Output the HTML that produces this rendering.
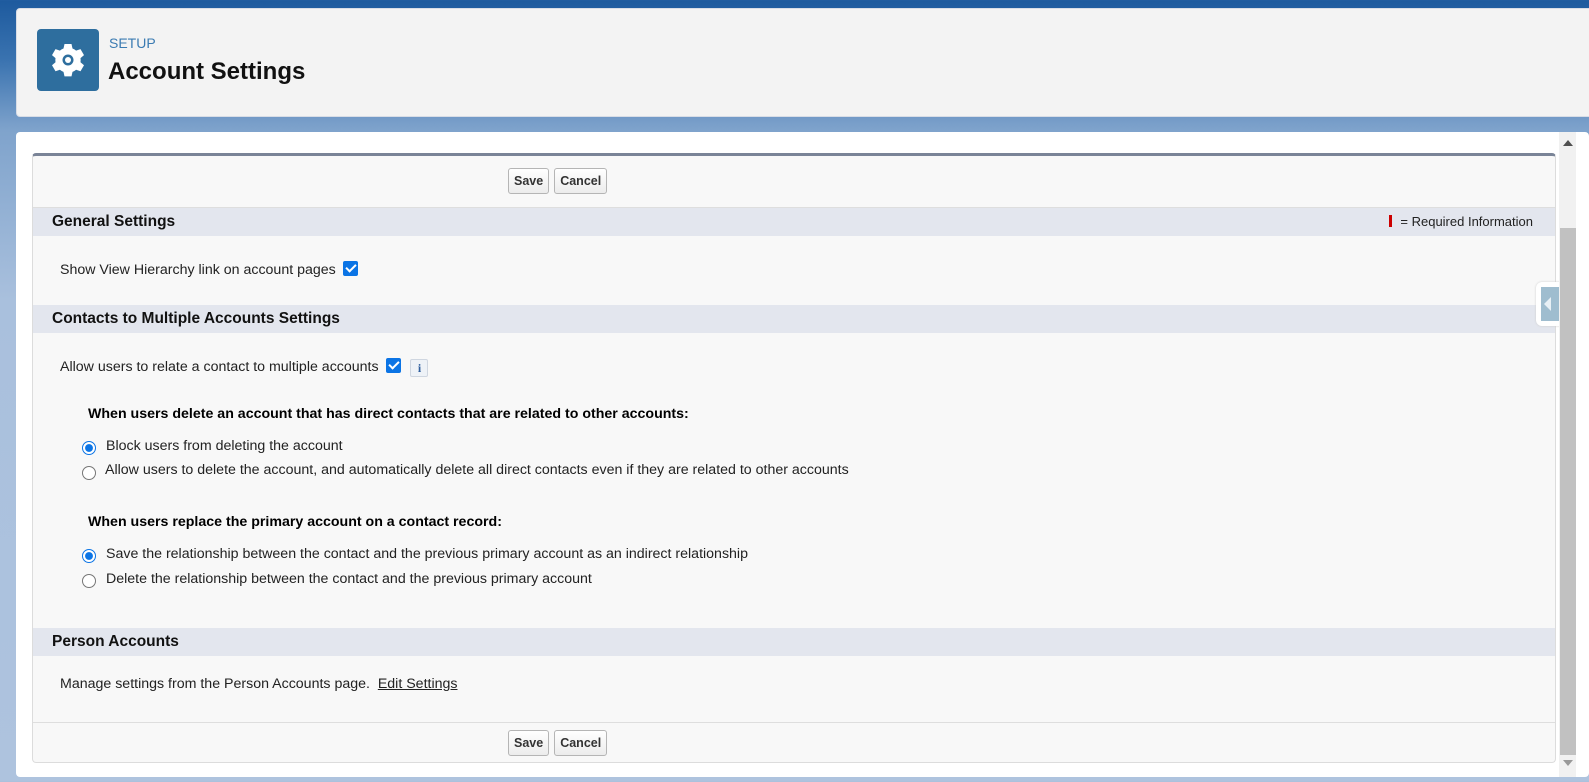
<!DOCTYPE html>
<html><head><meta charset="utf-8">
<style>
*{box-sizing:border-box;margin:0;padding:0}
body{width:1589px;height:782px;overflow:hidden;font-family:"Liberation Sans",Arial,sans-serif;color:#000;
background:linear-gradient(180deg,#1d5a9e 0px,#3a73b0 60px,#7fa3cc 130px,#a9c0dd 300px,#aec3de 782px);position:relative}
.hdr{position:absolute;left:16px;top:8px;width:1600px;height:109px;background:#f3f3f3;border-radius:4px;border:1px solid #d8dde6}
.icon{position:absolute;left:20px;top:20px;width:62px;height:62px;background:#2e6e9e;border-radius:4px}
.setup{position:absolute;left:92px;top:26px;font-size:14px;color:#3b7bb2}
.title{position:absolute;left:91px;top:49px;font-size:24px;font-weight:bold;color:#111}
.panel{position:absolute;left:16px;top:132px;width:1573px;height:645px;background:#fff;border-radius:4px}
.box{position:absolute;left:16px;top:21px;width:1524px;height:610px;background:#f8f8f8;border:1px solid #dcdcdc;border-top:3px solid #7a8497;border-radius:4px}
.btns{position:absolute;left:475px;height:28px}
.btn{display:inline-block;height:26px;line-height:24px;border:1px solid #b5b5b5;border-radius:3px;background:linear-gradient(#fff,#ececec);font-size:12.5px;font-weight:bold;color:#333;padding:0 5px;margin-right:5px}
.band{position:absolute;left:0;width:1522px;height:28px;background:#e3e6ee;font-size:15.5px;font-weight:bold;padding:5px 0 0 19px;color:#111}
.t{position:absolute;font-size:14.2px;color:#222;white-space:nowrap}
.b{font-weight:bold;color:#000}
.cb{display:inline-block;width:15px;height:15px;background:#0b74e5;border-radius:2px;vertical-align:-2px;position:relative;margin-left:3px}
.cb:after{content:"";position:absolute;left:5px;top:1px;width:4px;height:8px;border:solid #fff;border-width:0 2px 2px 0;transform:rotate(45deg)}
.rad{position:absolute;width:14px;height:14px;border-radius:50%;border:1px solid #767676;background:#fff}
.rad.on{border:1px solid #0b74e5;background:radial-gradient(circle,#0b74e5 0 3.6px,#fff 4.2px)}
.line{position:absolute;left:0;width:1522px;height:1px;background:#dedede}
.sb{position:absolute;left:1543px;top:0;width:17px;height:645px;background:#f1f1f1}
.thumb{position:absolute;left:1px;top:96px;width:16px;height:527px;background:#c1c1c1}
</style></head><body>
<div class="hdr">
 <div class="icon"><svg width="62" height="62" viewBox="0 0 62 62"><g fill="#fff" transform="translate(31,31)">
 <path d="M-3.5,-16h7l1,4.5a12,12 0 0 1 3.6,2.1l4.4,-1.5 3.5,6 -3.5,3a12,12 0 0 1 0,4.2l3.5,3 -3.5,6 -4.4,-1.5a12,12 0 0 1 -3.6,2.1l-1,4.5h-7l-1,-4.5a12,12 0 0 1 -3.6,-2.1l-4.4,1.5 -3.5,-6 3.5,-3a12,12 0 0 1 0,-4.2l-3.5,-3 3.5,-6 4.4,1.5a12,12 0 0 1 3.6,-2.1z"/>
 <circle r="5.5" fill="#2e6e9e"/><circle r="3" fill="#fff"/></g></svg></div>
 <div class="setup">SETUP</div>
 <div class="title">Account Settings</div>
</div>
<div class="panel">
 <div class="box">
  <div class="btns" style="top:12px"><span class="btn">Save</span><span class="btn">Cancel</span></div>
  <div class="line" style="top:51px"></div>
  <div class="band" style="top:52px">General Settings<span style="position:absolute;right:22px;top:6px;font-size:13px;font-weight:normal;color:#222"><span style="display:inline-block;width:3px;height:12px;background:#c00;vertical-align:-1px;margin-right:8px"></span>= Required Information</span></div>
  <div class="t" style="left:27px;top:105px">Show View Hierarchy link on account pages <span class="cb"></span></div>
  <div class="band" style="top:149px">Contacts to Multiple Accounts Settings</div>
  <div class="t" style="left:27px;top:202px">Allow users to relate a contact to multiple accounts <span class="cb"></span> <span style="display:inline-block;width:18px;height:18px;border:1px solid #cfd6e0;border-radius:2px;background:#eef2f7;color:#2f5e9e;font-size:12px;font-weight:bold;text-align:center;line-height:16px;vertical-align:-1px;margin-left:6px;font-family:'Liberation Serif',serif">i</span></div>
  <div class="t b" style="left:55px;top:250px">When users delete an account that has direct contacts that are related to other accounts:</div>
  <div class="rad on" style="left:49px;top:285px"></div>
  <div class="t" style="left:73px;top:282px">Block users from deleting the account</div>
  <div class="rad" style="left:49px;top:310px"></div>
  <div class="t" style="left:72px;top:306px">Allow users to delete the account, and automatically delete all direct contacts even if they are related to other accounts</div>
  <div class="t b" style="left:55px;top:358px">When users replace the primary account on a contact record:</div>
  <div class="rad on" style="left:49px;top:393px"></div>
  <div class="t" style="left:73px;top:390px">Save the relationship between the contact and the previous primary account as an indirect relationship</div>
  <div class="rad" style="left:49px;top:418px"></div>
  <div class="t" style="left:73px;top:415px">Delete the relationship between the contact and the previous primary account</div>
  <div class="band" style="top:472px">Person Accounts</div>
  <div class="t" style="left:27px;top:520px">Manage settings from the Person Accounts page.&nbsp; <u>Edit Settings</u></div>
  <div class="line" style="top:566px"></div>
  <div class="btns" style="top:574px"><span class="btn">Save</span><span class="btn">Cancel</span></div>
 </div>
 <div style="position:absolute;left:1520px;top:150px;width:26px;height:44px;background:#fff;border-radius:6px 0 0 6px;box-shadow:0 0 2px #ccc"><div style="position:absolute;left:5px;top:5px;width:21px;height:34px;background:#9fbdcf"></div><div style="position:absolute;left:8px;top:15px;border-right:7px solid #e8f0f5;border-top:7px solid transparent;border-bottom:7px solid transparent"></div></div>
 <div class="sb"><div class="thumb"></div>
  <div style="position:absolute;left:4px;top:8px;border-bottom:6px solid #505050;border-left:5px solid transparent;border-right:5px solid transparent"></div>
  <div style="position:absolute;left:4px;top:628px;border-top:6px solid #999;border-left:5px solid transparent;border-right:5px solid transparent"></div>
 </div>
</div>
</body></html>
